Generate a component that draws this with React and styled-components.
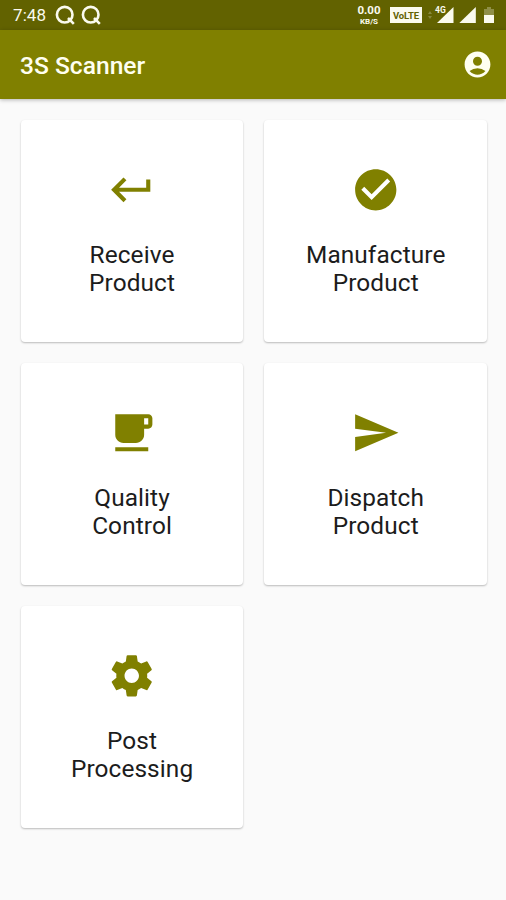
import React from "react";
import styled,{ createGlobalStyle } from "styled-components";
import { MdAccountCircle,MdCheckCircle,MdKeyboardReturn } from "react-icons/md";

const GlobalStyle=createGlobalStyle`
*{
    box-sizing:border-box;
}
body{
    margin:0;
    background:#fafafa;
    font-family:Roboto,"Liberation Sans",sans-serif;
}
`;
const Screen=styled.div`
display:flex;
flex-direction:column;
width:100%;
height:900px;
overflow:hidden;
background:#fafafa;
`;
const StatusBar=styled.div`
display:flex;
align-items:center;
justify-content:space-between;
height:30px;
flex:none;
padding:0 12px 0 13px;
background:#626200;
color:#fafaee;
`;
const StatusGroup=styled.div`
display:flex;
align-items:center;
height:30px;
`;
const Clock=styled.span`
width:42px;
font-size:17px;
line-height:30px;
letter-spacing:0.1px;
`;
const SearchMark=styled.svg`
width:20px;
height:20px;
margin-right:6px;
`;
const NetSpeed=styled.div`
display:flex;
flex-direction:column;
align-items:center;
width:26px;
margin-right:8px;
font-size:11.5px;
line-height:13px;
font-weight:bold;
& small{
    font-size:8px;
    line-height:9px;
}
`;
const VolteBadge=styled.span`
width:32px;
height:16px;
margin-right:6px;
background:#fafaee;
color:#626200;
font-size:9.5px;
line-height:17px;
font-weight:bold;
text-align:center;
letter-spacing:-0.1px;
`;
const SignalIcon=styled.svg`
width:${props=>props.$width}px;
height:20px;
margin-right:${props=>props.$gap}px;
`;
const BatteryIcon=styled.svg`
width:10px;
height:18px;
`;
const AppBar=styled.header`
display:flex;
align-items:center;
justify-content:space-between;
height:68.5px;
flex:none;
padding:0 13px 0 20px;
background:#808000;
color:#fffff0;
box-shadow:0 1px 4px rgba(0,0,0,0.28);
& svg{
    width:31px;
    height:31px;
}
`;
const Title=styled.h1`
margin:0;
padding-top:3px;
font-size:24.6px;
font-weight:500;
line-height:30px;
`;
const Grid=styled.main`
display:grid;
grid-template-columns:222.5px 222.5px;
grid-auto-rows:222px;
gap:21.2px;
padding:21.5px 20.8px;
`;
const Card=styled.section`
display:flex;
flex-direction:column;
align-items:center;
padding-top:44.7px;
border-radius:4px;
background:white;
color:#1c1c1c;
box-shadow:0 1px 2px rgba(0,0,0,0.26);
& svg{
    width:49.5px;
    height:49.5px;
    flex:none;
    color:#808000;
}
`;
const CardLabel=styled.div`
width:150px;
margin-top:26.6px;
font-size:24.4px;
line-height:28px;
letter-spacing:0.1px;
text-align:center;
`;

const CupIcon=()=>(
    <svg viewBox="0 0 24 24" fill="currentColor">
        <path d="M20 3H4v10c0 2.21 1.79 4 4 4h6c2.21 0 4-1.79 4-4v-3h2c1.11 0 2-.9 2-2V5c0-1.11-.89-2-2-2zm0 5h-2V5h2v3zM4 19h16v2H4z"/>
    </svg>
)
const SendIcon=()=>(
    <svg viewBox="0 0 24 24" fill="currentColor">
        <path d="M2.01 21L23 12 2.01 3 2 10l15 2-15 2z"/>
    </svg>
)
const GearIcon=()=>(
    <svg viewBox="0 0 24 24" fill="currentColor">
        <path d="M19.43 12.98c.04-.32.07-.64.07-.98s-.03-.66-.07-.98l2.11-1.65c.19-.15.24-.42.12-.64l-2-3.46c-.12-.22-.39-.3-.61-.22l-2.49 1c-.52-.4-1.08-.73-1.69-.98l-.38-2.65C14.46 2.18 14.25 2 14 2h-4c-.25 0-.46.18-.49.42l-.38 2.65c-.61.25-1.17.59-1.69.98l-2.49-1c-.23-.09-.49 0-.61.22l-2 3.46c-.13.22-.07.49.12.64l2.11 1.65c-.04.32-.07.65-.07.98s.03.66.07.98l-2.11 1.65c-.19.15-.24.42-.12.64l2 3.46c.12.22.39.3.61.22l2.49-1c.52.4 1.08.73 1.69.98l.38 2.65c.03.24.24.42.49.42h4c.25 0 .46-.18.49-.42l.38-2.65c.61-.25 1.17-.59 1.69-.98l2.49 1c.23.09.49 0 .61-.22l2-3.46c.12-.22.07-.49-.12-.64l-2.11-1.65zM12 15.5c-1.93 0-3.5-1.57-3.5-3.5s1.57-3.5 3.5-3.5 3.5 1.57 3.5 3.5-1.57 3.5-3.5 3.5z"/>
    </svg>
)

const actions=[
    {icon:MdKeyboardReturn,lines:["Receive","Product"]},
    {icon:MdCheckCircle,lines:["Manufacture","Product"]},
    {icon:CupIcon,lines:["Quality","Control"]},
    {icon:SendIcon,lines:["Dispatch","Product"]},
    {icon:GearIcon,lines:["Post","Processing"]},
];

const Search=()=>(
    <SearchMark viewBox="0 0 20 20" fill="none" stroke="currentColor" strokeWidth="2.6">
        <circle cx="9.7" cy="9.7" r="7.8"/>
        <path d="M13 13l5.8 5.8"/>
    </SearchMark>
)

const PhoneStatus=()=>(
    <StatusBar>
        <StatusGroup>
            <Clock>7:48</Clock>
            <Search/>
            <Search/>
        </StatusGroup>
        <StatusGroup>
            <NetSpeed>0.00<small>KB/S</small></NetSpeed>
            <VolteBadge>VoLTE</VolteBadge>
            <SignalIcon viewBox="0 0 26 20" $width={26} $gap={5} fill="currentColor">
                <path d="M0 9l2-3 2 3zM0 11l2 3 2-3z" opacity="0.25"/>
                <path d="M25.5 2v16H9z"/>
                <text x="7" y="8" fontSize="8.5" fontWeight="bold" stroke="#626200" strokeWidth="1.2" paintOrder="stroke">4G</text>
            </SignalIcon>
            <SignalIcon viewBox="0 0 17 20" $width={17} $gap={8} fill="currentColor">
                <path d="M16.8 2v16H.3z"/>
            </SignalIcon>
            <BatteryIcon viewBox="0 0 10 18" fill="currentColor">
                <path d="M3 1h4v2h3v6H0V3h3z" opacity="0.3"/>
                <path d="M0 9h10v8H0z"/>
            </BatteryIcon>
        </StatusGroup>
    </StatusBar>
)

const App=()=>{
    return (
        <Screen>
            <GlobalStyle/>
            <PhoneStatus/>
            <AppBar>
                <Title>3S Scanner</Title>
                <MdAccountCircle/>
            </AppBar>
            <Grid>
                {actions.map(({icon:Icon,lines})=>(
                    <Card key={lines.join(" ")}>
                        <Icon/>
                        <CardLabel>{lines[0]}<br/>{lines[1]}</CardLabel>
                    </Card>
                ))}
            </Grid>
        </Screen>
    )
}
export default App;
